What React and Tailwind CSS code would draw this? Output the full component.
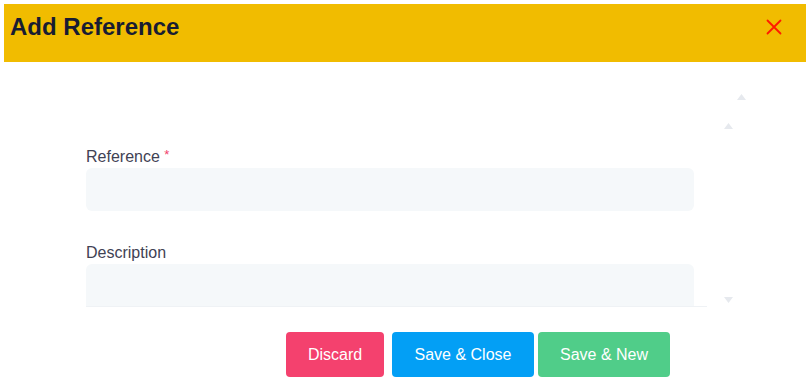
export default function App() {
  const font = { fontFamily: '"Liberation Sans", Arial, sans-serif' };
  return (
    <div className="w-[810px] h-[384px] bg-white relative overflow-hidden" style={font}>
      <div className="mx-1 mt-1 h-[58px] bg-[#f1bc00] flex items-start justify-between pl-[6px] pr-[24px] pt-[7px]">
        <h1 className="text-[24px] leading-[32px] font-bold text-[#181c32]">Add Reference</h1>
        <button className="mt-[8px] w-4 h-4 flex items-center justify-center">
          <svg width="16" height="16" viewBox="0 0 16 16">
            <path d="M1.5 1.5 L14.5 14.5 M14.5 1.5 L1.5 14.5" stroke="#ff1a00" strokeWidth="1.8" strokeLinecap="round" />
          </svg>
        </button>
      </div>

      <div className="relative">
        <svg className="absolute left-[737px] top-[32px]" width="9" height="6" viewBox="0 0 9 6">
          <path d="M0 6 L4.5 0 L9 6 Z" fill="#e6e9ee" />
        </svg>
        <svg className="absolute left-[724px] top-[61px]" width="9" height="6" viewBox="0 0 9 6">
          <path d="M0 6 L4.5 0 L9 6 Z" fill="#e6e9ee" />
        </svg>
        <svg className="absolute left-[724px] top-[235px]" width="9" height="6" viewBox="0 0 9 6">
          <path d="M0 0 L4.5 6 L9 0 Z" fill="#e6e9ee" />
        </svg>

        <div className="pt-[58px] pl-[86px]">
          <div className="w-[621px] h-[187px] overflow-hidden border-b border-[#eff2f5]">
            <div className="pt-[27px] w-[608px]">
              <label className="block text-[16px] leading-[20px] text-[#3f4254] mb-[1px]">
                Reference <span className="text-[#f1416c] text-[13px] align-top relative top-[-2px]">*</span>
              </label>
              <div className="h-[43px] rounded-[6px] bg-[#f5f8fa]" />
              <label className="block text-[16px] leading-[20px] text-[#3f4254] mt-[32px] mb-[1px]">Description</label>
              <div className="h-[60px] rounded-[6px] bg-[#f5f8fa]" />
            </div>
          </div>
        </div>

        <div className="flex pl-[286px] mt-[25px]">
          <button className="w-[98px] h-[45px] rounded-[4px] bg-[#f4416e] text-white text-[16px]">Discard</button>
          <button className="ml-[8px] w-[142px] h-[45px] rounded-[4px] bg-[#039ff5] text-white text-[16px]">Save &amp; Close</button>
          <button className="ml-[4px] w-[132px] h-[45px] rounded-[4px] bg-[#50cd89] text-white text-[16px]">Save &amp; New</button>
        </div>
      </div>
    </div>
  );
}
